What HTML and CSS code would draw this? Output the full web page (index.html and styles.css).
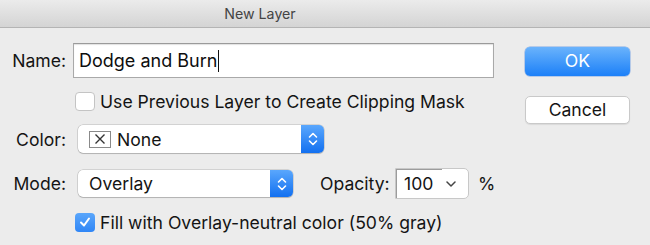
FILE: index.html
```
<!DOCTYPE html>
<html>
<head>
	<meta charset="UTF-8">
	<title>New Layer</title>
	<link rel="stylesheet" href="styles.css">
</head>
<body>
	<div class="dialog">
		<div class="titlebar">New Layer</div>
		<div class="content">
			<div class="form">
				<div class="row row-name">
					<span class="label">Name:</span>
					<div class="textfield">Dodge and Burn<i class="caret"></i></div>
				</div>
				<div class="row row-check">
					<span class="checkbox"></span>
					<span>Use Previous Layer to Create Clipping Mask</span>
				</div>
				<div class="row row-color">
					<span class="label">Color:</span>
					<div class="popup popup-color">
						<span class="value"><i class="swatch-none">
							<svg width="12" height="12" viewBox="0 0 12 12"><path d="M1.5 1.5 L10.5 10.5 M10.5 1.5 L1.5 10.5" stroke="#333" stroke-width="1.4" fill="none"/></svg>
						</i>None</span>
						<span class="stepper">
							<svg width="10" height="16" viewBox="0 0 10 16"><path d="M1.5 6 L5 2.5 L8.5 6 M1.5 10 L5 13.5 L8.5 10" stroke="#fff" stroke-width="1.6" fill="none" stroke-linecap="round" stroke-linejoin="round"/></svg>
						</span>
					</div>
				</div>
				<div class="row row-mode">
					<span class="label">Mode:</span>
					<div class="popup popup-mode">
						<span class="value">Overlay</span>
						<span class="stepper">
							<svg width="10" height="16" viewBox="0 0 10 16"><path d="M1.5 6 L5 2.5 L8.5 6 M1.5 10 L5 13.5 L8.5 10" stroke="#fff" stroke-width="1.6" fill="none" stroke-linecap="round" stroke-linejoin="round"/></svg>
						</span>
					</div>
					<span class="opacity-label">Opacity:</span>
					<div class="combo">
						<span class="combo-value">100</span>
						<span class="combo-arrow">
							<svg width="10" height="6" viewBox="0 0 10 6"><path d="M1 1 L5 5 L9 1" stroke="#444" stroke-width="1.5" fill="none" stroke-linecap="round" stroke-linejoin="round"/></svg>
						</span>
					</div>
					<span class="percent">%</span>
				</div>
				<div class="row row-check row-fill">
					<span class="checkbox checked">
						<svg width="12" height="12" viewBox="0 0 12 12"><path d="M2 6.5 L5 9.5 L10 2.5" stroke="#fff" stroke-width="2" fill="none" stroke-linecap="round" stroke-linejoin="round"/></svg>
					</span>
					<span>Fill with Overlay-neutral color (50% gray)</span>
				</div>
			</div>
			<div class="buttons">
				<div class="button button-ok">OK</div>
				<div class="button button-cancel">Cancel</div>
			</div>
		</div>
	</div>
</body>
</html>
```

FILE: styles.css
```
html, body {
    margin: 0;
    padding: 0;
}
body {
    background: #ececec;
    font-family: Inter, "Liberation Sans", sans-serif;
    font-size: 17.6px;
    color: #141414;
}
.dialog {
    width: 650px;
    height: 245px;
    overflow: hidden;
}
.titlebar {
    height: 27px;
    line-height: 27px;
    padding-right: 130px;
    text-align: center;
    font-size: 14.2px;
    color: #444;
    background: linear-gradient(#ebebeb, #d4d4d4);
    border-bottom: 1px solid #b4b4b4;
}
.content {
    display: flex;
}
.form {
    padding-top: 15px;
}
.row {
    display: flex;
    align-items: center;
}
.label {
    width: 66px;
    text-align: right;
    flex: none;
}
.row-name {
    height: 35px;
}
.textfield {
    margin-left: 7px;
    width: 421px;
    height: 35px;
    box-sizing: border-box;
    border: 1px solid #a9a9a9;
    border-top-color: #9a9a9a;
    box-shadow: inset 0 1px 1px rgba(0,0,0,.12);
    background: #fff;
    padding-left: 5px;
    display: flex;
    align-items: center;
    font-size: 18px;
    color: #0d0d0d;
}
.caret {
    width: 1px;
    height: 22px;
    background: #111;
    margin-left: 1px;
}
.row-check {
    margin-top: 13px;
    height: 20px;
    padding-left: 75px;
}
.checkbox {
    width: 20px;
    height: 19px;
    box-sizing: border-box;
    border: 1px solid #c4c4c4;
    border-radius: 4px;
    background: #fff;
    margin-right: 5px;
    display: flex;
    align-items: center;
    justify-content: center;
    flex: none;
}
.checkbox.checked {
    border: none;
    background: linear-gradient(#5aa6fb, #2f86f6);
}
.row-color {
    margin-top: 14px;
    height: 28px;
}
.popup {
    margin-left: 12px;
    height: 28px;
    box-sizing: border-box;
    background: #fff;
    border-radius: 5px;
    box-shadow: 0 0 0 0.5px rgba(0,0,0,.22), 0 1px 1px rgba(0,0,0,.15);
    display: flex;
    align-items: center;
    justify-content: space-between;
    overflow: hidden;
}
.popup-color {
    width: 246px;
}
.popup-mode {
    width: 215px;
    height: 27px;
}
.value {
    padding-left: 11px;
    display: flex;
    align-items: center;
}
.swatch-none {
    width: 22px;
    height: 17px;
    box-sizing: border-box;
    border: 1px solid #8a8a8a;
    display: flex;
    align-items: center;
    justify-content: center;
    margin-right: 6px;
}
.stepper {
    width: 23px;
    align-self: stretch;
    background: linear-gradient(#5aa7fd, #1270f0);
    display: flex;
    align-items: center;
    justify-content: center;
}
.row-mode {
    margin-top: 15px;
    height: 31px;
}
.opacity-label {
    margin-left: 27px;
    width: 69px;
    flex: none;
}
.combo {
    margin-left: 6px;
    width: 74px;
    height: 31px;
    box-sizing: border-box;
    background: #fff;
    border: 1px solid #c8c8c8;
    border-radius: 0 5px 5px 0;
    display: flex;
    align-items: center;
    justify-content: space-between;
}
.combo-value {
    padding-left: 8px;
    width: 46px;
    height: 29px;
    line-height: 29px;
    box-sizing: border-box;
    box-shadow: inset 1px 1px 0 #9c9c9c;
}
.combo-arrow {
    padding-right: 12px;
    display: flex;
}
.percent {
    margin-left: 9px;
}
.row-fill {
    margin-top: 13px;
}
.buttons {
    margin-left: auto;
    margin-right: 20px;
    padding-top: 19px;
    display: flex;
    flex-direction: column;
    gap: 20px;
}
.button {
    width: 105px;
    height: 28px;
    box-sizing: border-box;
    border-radius: 5px;
    text-align: center;
    line-height: 28px;
}
.button-ok {
    height: 29px;
    background: linear-gradient(#6ab3fc, #1c80f8);
    color: #fff;
    box-shadow: 0 0 0 0.5px rgba(20,100,220,.5);
}
.button-cancel {
    background: #fff;
    line-height: 26px;
    border: 1px solid #c9c9c9;
    box-shadow: 0 1px 1px rgba(0,0,0,.08);
}
```
